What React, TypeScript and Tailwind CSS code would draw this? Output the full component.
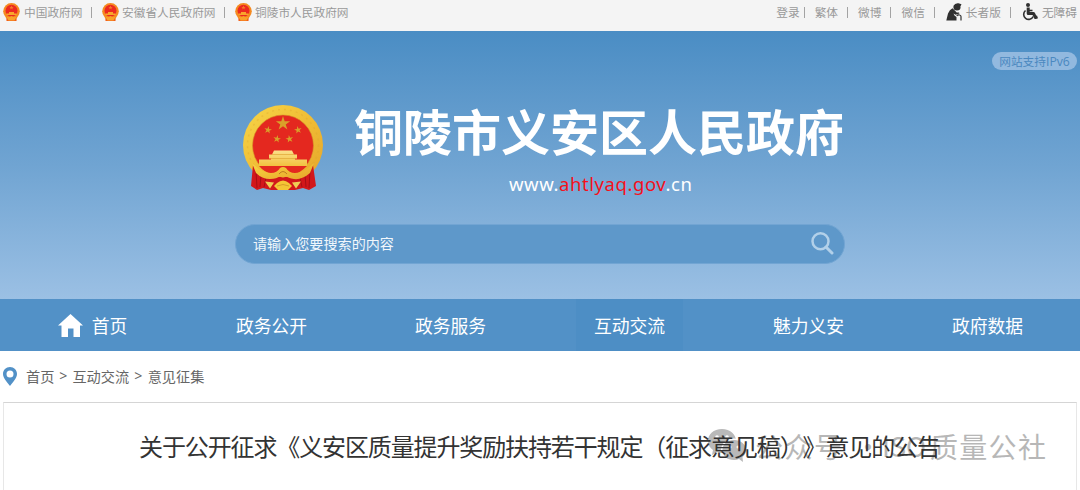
import React from 'react';

function Star({ x, y, r, rot = 0 }: { x: number; y: number; r: number; rot?: number }) {
  const pts = Array.from({ length: 10 }, (_, i) => {
    const a = ((i * 36 - 90 + rot) * Math.PI) / 180;
    const q = i % 2 ? r * 0.38 : r;
    return `${(x + q * Math.cos(a)).toFixed(2)},${(y + q * Math.sin(a)).toFixed(2)}`;
  }).join(' ');
  return <polygon points={pts} fill="#d9a02a" />;
}

function Emblem() {
  return (
    <svg className="block h-[86px] w-[82px] shrink-0" viewBox="0 0 82 86">
      <defs>
        <linearGradient id="gold" x1="0" y1="0" x2="1" y2="1">
          <stop offset="0" stopColor="#f7d648" />
          <stop offset="0.5" stopColor="#f0bd35" />
          <stop offset="1" stopColor="#e5a42a" />
        </linearGradient>
        <linearGradient id="gate" x1="0" y1="0" x2="0" y2="1">
          <stop offset="0" stopColor="#fbe08a" />
          <stop offset="1" stopColor="#f2c13f" />
        </linearGradient>
      </defs>
      <circle cx="41" cy="40" r="40" fill="url(#gold)" />
      <circle cx="41" cy="40" r="35.500" fill="none" stroke="#dda32b" strokeWidth="1.500" strokeDasharray="2 4" opacity="0.35" />
      <circle cx="41" cy="40.500" r="30.500" fill="#e4281f" stroke="#d59728" strokeWidth="0.600" />
      <Star x={41} y={18.5} r={7.5} />
      <Star x={26} y={25} r={4} rot={10} />
      <Star x={56} y={25} r={4} rot={-10} />
      <Star x={35} y={34} r={4} rot={10} />
      <Star x={47.5} y={34} r={4} rot={-10} />
      <path d="M32 45.500h18l2 4h3v4h-2v1h12v6.500H17V54.500h12v-1h-2v-4h3z" fill="url(#gate)" />
      <path d="M30 49.500h22M29 53.500h24" stroke="#e0a637" strokeWidth="0.700" />
      <path d="M11 60Q18 70 28 72H54Q64 70 71 60L74 81 67 85 61 83 53 85H29L21 83 15 85 9 81z" fill="#d2171b" />
      <path d="M14 66L15 83M19 70L18 82M24 73L22 82M68 66L67 83M63 70L64 82M58 73L60 82" stroke="#a30d14" strokeWidth="0.900" />
      <path d="M17 61h48Q58 68 52 69L45 64H37L30 69Q22 67 17 61z" fill="#e4281f" />
      <path d="M10 58Q20 68 29 68Q35 68 38 63Q41 61 44 63Q47 68 53 68Q62 68 72 58L68 68Q60 75 52 74Q46 73 44 71Q41 74 38 71Q35 74 28 74Q20 74 14 68z" fill="url(#gold)" />
      <path d="M37 69q4-5 8 0" fill="none" stroke="#bf7d20" strokeWidth="1" />
      <path d="M23 76.500l9 1-4 6zM59 76.500l-9 1 4 6z" fill="#efcd55" />
      <path d="M35 78q6-5 12 0l3 3-4 4H36l-4-4z" fill="#f4c635" />
      <path d="M35 81q6-3 12 0" stroke="#cf9226" strokeWidth="0.800" fill="none" />
    </svg>
  );
}

function MiniEmblem() {
  return (
    <svg className="block h-[18px] w-[17px] shrink-0" viewBox="0 0 17 18">
      <path d="M3 11h11l-.5 7H3.500z" fill="#f2601a" />
      <circle cx="8.500" cy="8.300" r="8.300" fill="#f58a20" />
      <circle cx="8.500" cy="7.800" r="6" fill="#ec2a20" />
      <path d="M8.500 2.500l.6 1.400 1.500.1-1.200 1 .4 1.400-1.300-.8-1.300.8.4-1.400-1.200-1 1.500-.1z" fill="#f47b28" />
      <path d="M6 9h5v1.500h2.500V12h-10v-1.500H6z" fill="#f9a52c" />
      <path d="M3.500 13.500q2.500 1.500 5-.5q2.500 2 5 .5l-2 4h-6z" fill="#f9a32a" />
    </svg>
  );
}

function ElderIcon() {
  return (
    <svg className="block h-[18px] w-[16px]" viewBox="0 0 16 18" fill="#303030">
      <ellipse cx="11" cy="4.500" rx="3.500" ry="3" />
      <path d="M7.500 2.800Q9-.2 12.500.3L15.500 1.200 14.500 3.200 8 5z" />
      <path d="M6.500 5.200Q3.500 6.500 2 10.500L.3 17.500H10.500V14L8.500 12.500 7.500 10.500 9.500 11.800 13.500 10.600 13 9.400 10.700 9.600 8.800 7.400z" />
      <path d="M10.800 13Q11.500 11.600 13.500 12Q15 12.300 15 13.500V17.500" fill="none" stroke="#303030" strokeWidth="1.200" />
    </svg>
  );
}

function WheelchairIcon() {
  return (
    <svg className="block h-[18px] w-[16px]" viewBox="0 0 16 18" fill="none" stroke="#303030">
      <circle cx="6" cy="2" r="2" fill="#303030" stroke="none" />
      <path d="M6.200 4.500V10.500H11.500L13.500 14.500 15.500 13.800" strokeWidth="3" strokeLinejoin="round" />
      <path d="M6.500 7.500H10.500" strokeWidth="1.600" />
      <path d="M3.500 7.500A5 5 0 1 0 11.200 13.500" strokeWidth="1.600" />
    </svg>
  );
}

const quick = [
  { t: '登录', gap: 'ml-0' },
  { t: '繁体', gap: 'ml-[10px]' },
  { t: '微博', gap: 'ml-[10px]' },
  { t: '微信', gap: 'ml-[10px]' },
];

function Bar({ className }: { className: string }) {
  return <span className={`mt-[1px] h-[11px] w-px shrink-0 bg-[#a3a3a3] ${className}`} />;
}

function TopBar() {
  return (
    <div className="flex h-[31px] items-start justify-between bg-[#f4f4f4] text-[11.7px] leading-[24px] whitespace-nowrap text-[#999]">
      <div className="flex h-[24px] items-center pl-[3px]">
        <MiniEmblem />
        <span className="ml-[4px] w-[58px]">中国政府网</span>
        <Bar className="ml-[9px]" />
        <span className="ml-[10px]"><MiniEmblem /></span>
        <span className="ml-[3px] w-[93px]">安徽省人民政府网</span>
        <Bar className="ml-[9px]" />
        <span className="ml-[10px]"><MiniEmblem /></span>
        <span className="ml-[3px]">铜陵市人民政府网</span>
      </div>
      <div className="flex h-[24px] items-center pr-[3px]">
        {quick.map((q, i) => (
          <React.Fragment key={q.t}>
            <span className={q.gap}>{q.t}</span>
            <Bar className={i === 0 ? 'ml-[4px]' : 'ml-[9px]'} />
          </React.Fragment>
        ))}
        <span className="ml-[11px]"><ElderIcon /></span>
        <span className="ml-[4px]">长者版</span>
        <Bar className="ml-[9px]" />
        <span className="ml-[11px]"><WheelchairIcon /></span>
        <span className="ml-[4px]">无障碍</span>
      </div>
    </div>
  );
}

function Header() {
  return (
    <header className="h-[268px] bg-linear-to-b from-[#4a8dc4] via-[#70a4d2] to-[#9bc0e4]">
      <div className="flex h-[74px] justify-end pt-[21px] pr-[3px]">
        <div className="h-[18px] w-[85px] rounded-full bg-[#92b9df] text-center text-[11.7px] leading-[17px] whitespace-nowrap text-[#4a88c0]">
          网站支持<span className="font-['Open_Sans',sans-serif] text-[12.200px]">IPv6</span>
        </div>
      </div>
      <div className="flex h-[119px] pl-[242px]">
        <Emblem />
        <div className="ml-[30px] w-[500px]">
          <h1 className="h-[67px] text-[49px] leading-[49px] font-bold whitespace-nowrap text-white">铜陵市义安区人民政府</h1>
          <div className="pl-[155px] font-['Noto_Sans',sans-serif] text-[18.500px] leading-[24px] tracking-[0.560px] text-white">
            www.<span className="text-[#f5101b]">ahtlyaq.gov</span>.cn
          </div>
        </div>
      </div>
      <div className="mx-auto flex h-[40px] w-[610px] items-center justify-between rounded-full border border-[#72a5d3] bg-[#5e98ca] pr-[10px] pl-[17px]">
        <span className="-mt-[2px] text-[14.100px] leading-[20px] text-[#f1f7fc]">请输入您要搜索的内容</span>
        <svg className="-mt-[2px] h-[24px] w-[24px]" viewBox="0 0 24 24" fill="none" stroke="#b2d0e9">
          <circle cx="10.500" cy="10.200" r="8" strokeWidth="2.500" />
          <path d="M16 16l6 6" strokeWidth="3" strokeLinecap="round" />
        </svg>
      </div>
    </header>
  );
}

const nav = ['首页', '政务公开', '政务服务', '互动交流', '魅力义安', '政府数据'];

function Nav() {
  return (
    <nav className="flex h-[52px] bg-[#5291c7] pl-[3px] text-[17.800px] leading-[52px] whitespace-nowrap text-white">
      {nav.map((n, i) => (
        <div key={n} className="flex w-[179px] shrink-0 justify-center">
          <div className={`flex h-[52px] justify-center ${i === 3 ? 'w-[107px] bg-[#4d8ec5]' : ''}`}>
            {i === 0 && (
              <svg className="mt-[15px] mr-[9px] h-[23px] w-[25px]" viewBox="0 0 25 23" fill="#fff">
                <path d="M12.500 0L25 11.500H22V23H15.500V14.500H10V23H3.500V11.500H0z" />
              </svg>
            )}
            <span>{n}</span>
          </div>
        </div>
      ))}
    </nav>
  );
}

function Watermark() {
  return (
    <div className="absolute top-[25px] left-[703px] flex h-[36px] items-center whitespace-nowrap opacity-60">
      <svg className="h-[34px] w-[40px]" viewBox="0 0 40 34">
        <path d="M15 0C6.500 0 1 5 1 12C1 16 3 19 6 21L5 26 10 23Q13 24 16 24C24 24 29 19 29 12C29 5 23 0 15 0z" fill="#8b8b8b" />
        <ellipse cx="27" cy="21" rx="13" ry="11.500" fill="#fff" />
        <path d="M27 11C20 11 15.500 15.500 15.500 21C15.500 27 20 31 27 31Q30 31 32 30L36 33 35.500 28Q39 25 39 21C39 15.500 34 11 27 11z" fill="#8b8b8b" />
        <g fill="#fff"><circle cx="10" cy="8" r="1.800" /><circle cx="20" cy="8" r="1.800" /><circle cx="23" cy="18" r="1.500" /><circle cx="31" cy="18" r="1.500" /></g>
      </svg>
      <div className="ml-[8px] flex text-[28px] leading-[36px] text-[#888]">
        <span className="w-[107px] tracking-[1.500px]">公众号</span>
        <span className="w-[20px] -indent-[8px]">·</span>
        <span className="w-[48px] text-[27px]">ISO</span>
        <span className="tracking-[1.300px]">质量公社</span>
      </div>
    </div>
  );
}

export default function App() {
  return (
    <div className="h-[490px] w-[1080px] overflow-hidden bg-white font-['Noto_Sans_CJK_SC',sans-serif]">
      <TopBar />
      <Header />
      <Nav />
      <div className="flex h-[51px] items-center pl-[3px] text-[14.200px] leading-[20px] whitespace-nowrap text-[#666]">
        <svg className="mr-[9px] h-[19px] w-[14px]" viewBox="0 0 14 19">
          <path fillRule="evenodd" d="M7 0C3 0 0 3 0 7C0 11 4 15 7 19C10 15 14 11 14 7C14 3 11 0 7 0zM7 3.500A3.500 3.500 0 1 1 7 10.500A3.500 3.500 0 0 1 7 3.500z" fill="#5291c7" />
        </svg>
        <div className="-mt-[2px] flex">
          <span>首页</span>
          <span className="w-[18px] text-center font-['Noto_Sans',sans-serif]">&gt;</span>
          <span>互动交流</span>
          <span className="w-[18.500px] text-center font-['Noto_Sans',sans-serif]">&gt;</span>
          <span>意见征集</span>
        </div>
      </div>
      <main className="relative ml-[3px] h-[100px] w-[1074px] border border-t-[#d5d5d5] border-x-[#e7e7e7] pt-[25px]">
        <Watermark />
        <h2 className="relative pl-[135px] text-[24px] leading-[36px] tracking-[-1.120px] whitespace-nowrap text-[#333] [text-spacing-trim:space-all]">
          关于公开征求《义安区质量提升奖励扶持若干规定（征求意见稿）》意见的公告
        </h2>
      </main>
    </div>
  );
}
